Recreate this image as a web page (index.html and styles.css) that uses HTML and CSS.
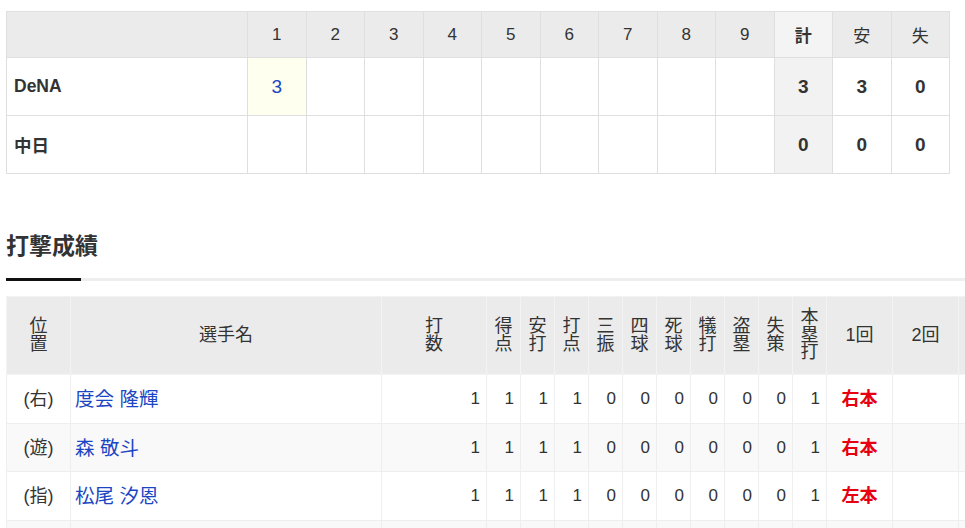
FILE: index.html
```html
<!DOCTYPE html>
<html lang="ja">
<head>
<meta charset="utf-8">
<title>試合結果</title>
<link rel="stylesheet" href="styles.css">
</head>
<body>
<main class="page">
  <table class="score">
    <colgroup><col class="c-team"><col span="12"></colgroup>
    <thead>
      <tr>
        <th></th><th>1</th><th>2</th><th>3</th><th>4</th><th>5</th><th>6</th><th>7</th><th>8</th><th>9</th>
        <th class="total">計</th><th>安</th><th>失</th>
      </tr>
    </thead>
    <tbody>
      <tr>
        <th class="team">DeNA</th>
        <td class="run"><a href="#">3</a></td><td></td><td></td><td></td><td></td><td></td><td></td><td></td><td></td>
        <td class="total b">3</td><td class="b">3</td><td class="b">0</td>
      </tr>
      <tr>
        <th class="team">中日</th>
        <td></td><td></td><td></td><td></td><td></td><td></td><td></td><td></td><td></td>
        <td class="total b">0</td><td class="b">0</td><td class="b">0</td>
      </tr>
    </tbody>
  </table>

  <section class="tabs">
    <h2 class="tab-title">打撃成績</h2>
    <div class="tab-line"><div class="tab-active"></div></div>
  </section>

  <div class="stats-wrap">
    <table class="stats">
      <colgroup>
        <col class="c-pos"><col class="c-name"><col class="c-ab">
        <col class="c-n" span="10">
        <col class="c-inn" span="9">
      </colgroup>
      <thead>
        <tr>
          <th>位<br>置</th><th>選手名</th><th>打<br>数</th>
          <th>得<br>点</th><th>安<br>打</th><th>打<br>点</th><th>三<br>振</th><th>四<br>球</th>
          <th>死<br>球</th><th>犠<br>打</th><th>盗<br>塁</th><th>失<br>策</th><th>本<br>塁<br>打</th>
          <th>1回</th><th>2回</th><th>3回</th><th>4回</th><th>5回</th><th>6回</th><th>7回</th><th>8回</th><th>9回</th>
        </tr>
      </thead>
      <tbody>
        <tr>
          <td class="pos">(右)</td><td class="name"><a href="#">度会 隆輝</a></td>
          <td>1</td><td>1</td><td>1</td><td>1</td><td>0</td><td>0</td><td>0</td><td>0</td><td>0</td><td>0</td><td>1</td>
          <td class="res">右本</td><td></td><td></td><td></td><td></td><td></td><td></td><td></td><td></td>
        </tr>
        <tr>
          <td class="pos">(遊)</td><td class="name"><a href="#">森 敬斗</a></td>
          <td>1</td><td>1</td><td>1</td><td>1</td><td>0</td><td>0</td><td>0</td><td>0</td><td>0</td><td>0</td><td>1</td>
          <td class="res">右本</td><td></td><td></td><td></td><td></td><td></td><td></td><td></td><td></td>
        </tr>
        <tr>
          <td class="pos">(指)</td><td class="name"><a href="#">松尾 汐恩</a></td>
          <td>1</td><td>1</td><td>1</td><td>1</td><td>0</td><td>0</td><td>0</td><td>0</td><td>0</td><td>0</td><td>1</td>
          <td class="res">左本</td><td></td><td></td><td></td><td></td><td></td><td></td><td></td><td></td>
        </tr>
        <tr>
          <td class="pos"></td><td class="name"></td>
          <td></td><td></td><td></td><td></td><td></td><td></td><td></td><td></td><td></td><td></td><td></td>
          <td></td><td></td><td></td><td></td><td></td><td></td><td></td><td></td><td></td>
        </tr>
      </tbody>
    </table>
  </div>
</main>
</body>
</html>
```

FILE: styles.css
```css
html, body {
  margin: 0;
  padding: 0;
  background: #fff;
}
body {
  font-family: "Liberation Sans", Arial, "Noto Sans CJK JP", sans-serif;
  color: #333;
}
.page {
  padding: 11px 0 0 6px;
  overflow: hidden;
}

/* scoreboard */
.score {
  width: 944px;
  border-collapse: collapse;
  table-layout: fixed;
}
.score .c-team { width: 241px; }
.score th,
.score td {
  border: 1px solid #dfdfdf;
  text-align: center;
  padding: 0;
}
.score thead th {
  height: 45px;
  background: #ebebeb;
  font-weight: normal;
  font-size: 17px;
}
.score thead th.total {
  background: #f4f4f4;
  font-weight: bold;
}
.score tbody th,
.score tbody td {
  height: 57px;
}
.score .team {
  text-align: left;
  padding-left: 7px;
  font-weight: bold;
  font-size: 17.5px;
}
.score td.total { background: #f2f2f2; }
.score .b {
  font-weight: bold;
  font-size: 19px;
}
.score .run {
  background: #fffff0;
  font-size: 19px;
}
.score .run a {
  color: #1a46c3;
  text-decoration: none;
}

/* tab heading */
.tabs { margin-top: 57px; }
.tab-title {
  margin: 0;
  font-size: 23px;
  line-height: 31px;
  font-weight: bold;
  color: #333;
  padding-bottom: 16px;
}
.tab-line {
  height: 3px;
  background: #eeeeee;
}
.tab-active {
  width: 75px;
  height: 3px;
  background: #111;
}

/* batting stats */
.stats-wrap {
  margin-top: 15px;
  overflow: hidden;
}
.stats {
  width: 1414px;
  border-collapse: collapse;
  table-layout: fixed;
}
.stats .c-pos { width: 64px; }
.stats .c-name { width: 311px; }
.stats .c-ab { width: 105px; }
.stats .c-n { width: 34px; }
.stats .c-inn { width: 66px; }
.stats th {
  height: 77px;
  background: #ebebeb;
  border: 1px solid #f3f3f3;
  font-weight: normal;
  font-size: 18px;
  line-height: 17.5px;
  padding: 0;
  text-align: center;
}
.stats td {
  height: 47.7px;
  border: 1px solid #eeeeee;
  font-size: 17px;
  line-height: 24px;
  padding: 0 6px 0 0;
  text-align: right;
  white-space: nowrap;
}
.stats tbody tr:nth-child(even) td { background: #f9f9f9; }
.stats td.pos {
  text-align: center;
  padding: 0;
  font-size: 18px;
}
.stats td.name {
  text-align: left;
  padding: 0 0 0 4px;
  font-size: 19.5px;
}
.stats td.name a {
  color: #1a46c3;
  text-decoration: none;
}
.stats td.res {
  text-align: center;
  padding: 0;
  color: #e60012;
  font-weight: bold;
  font-size: 18px;
}
```
